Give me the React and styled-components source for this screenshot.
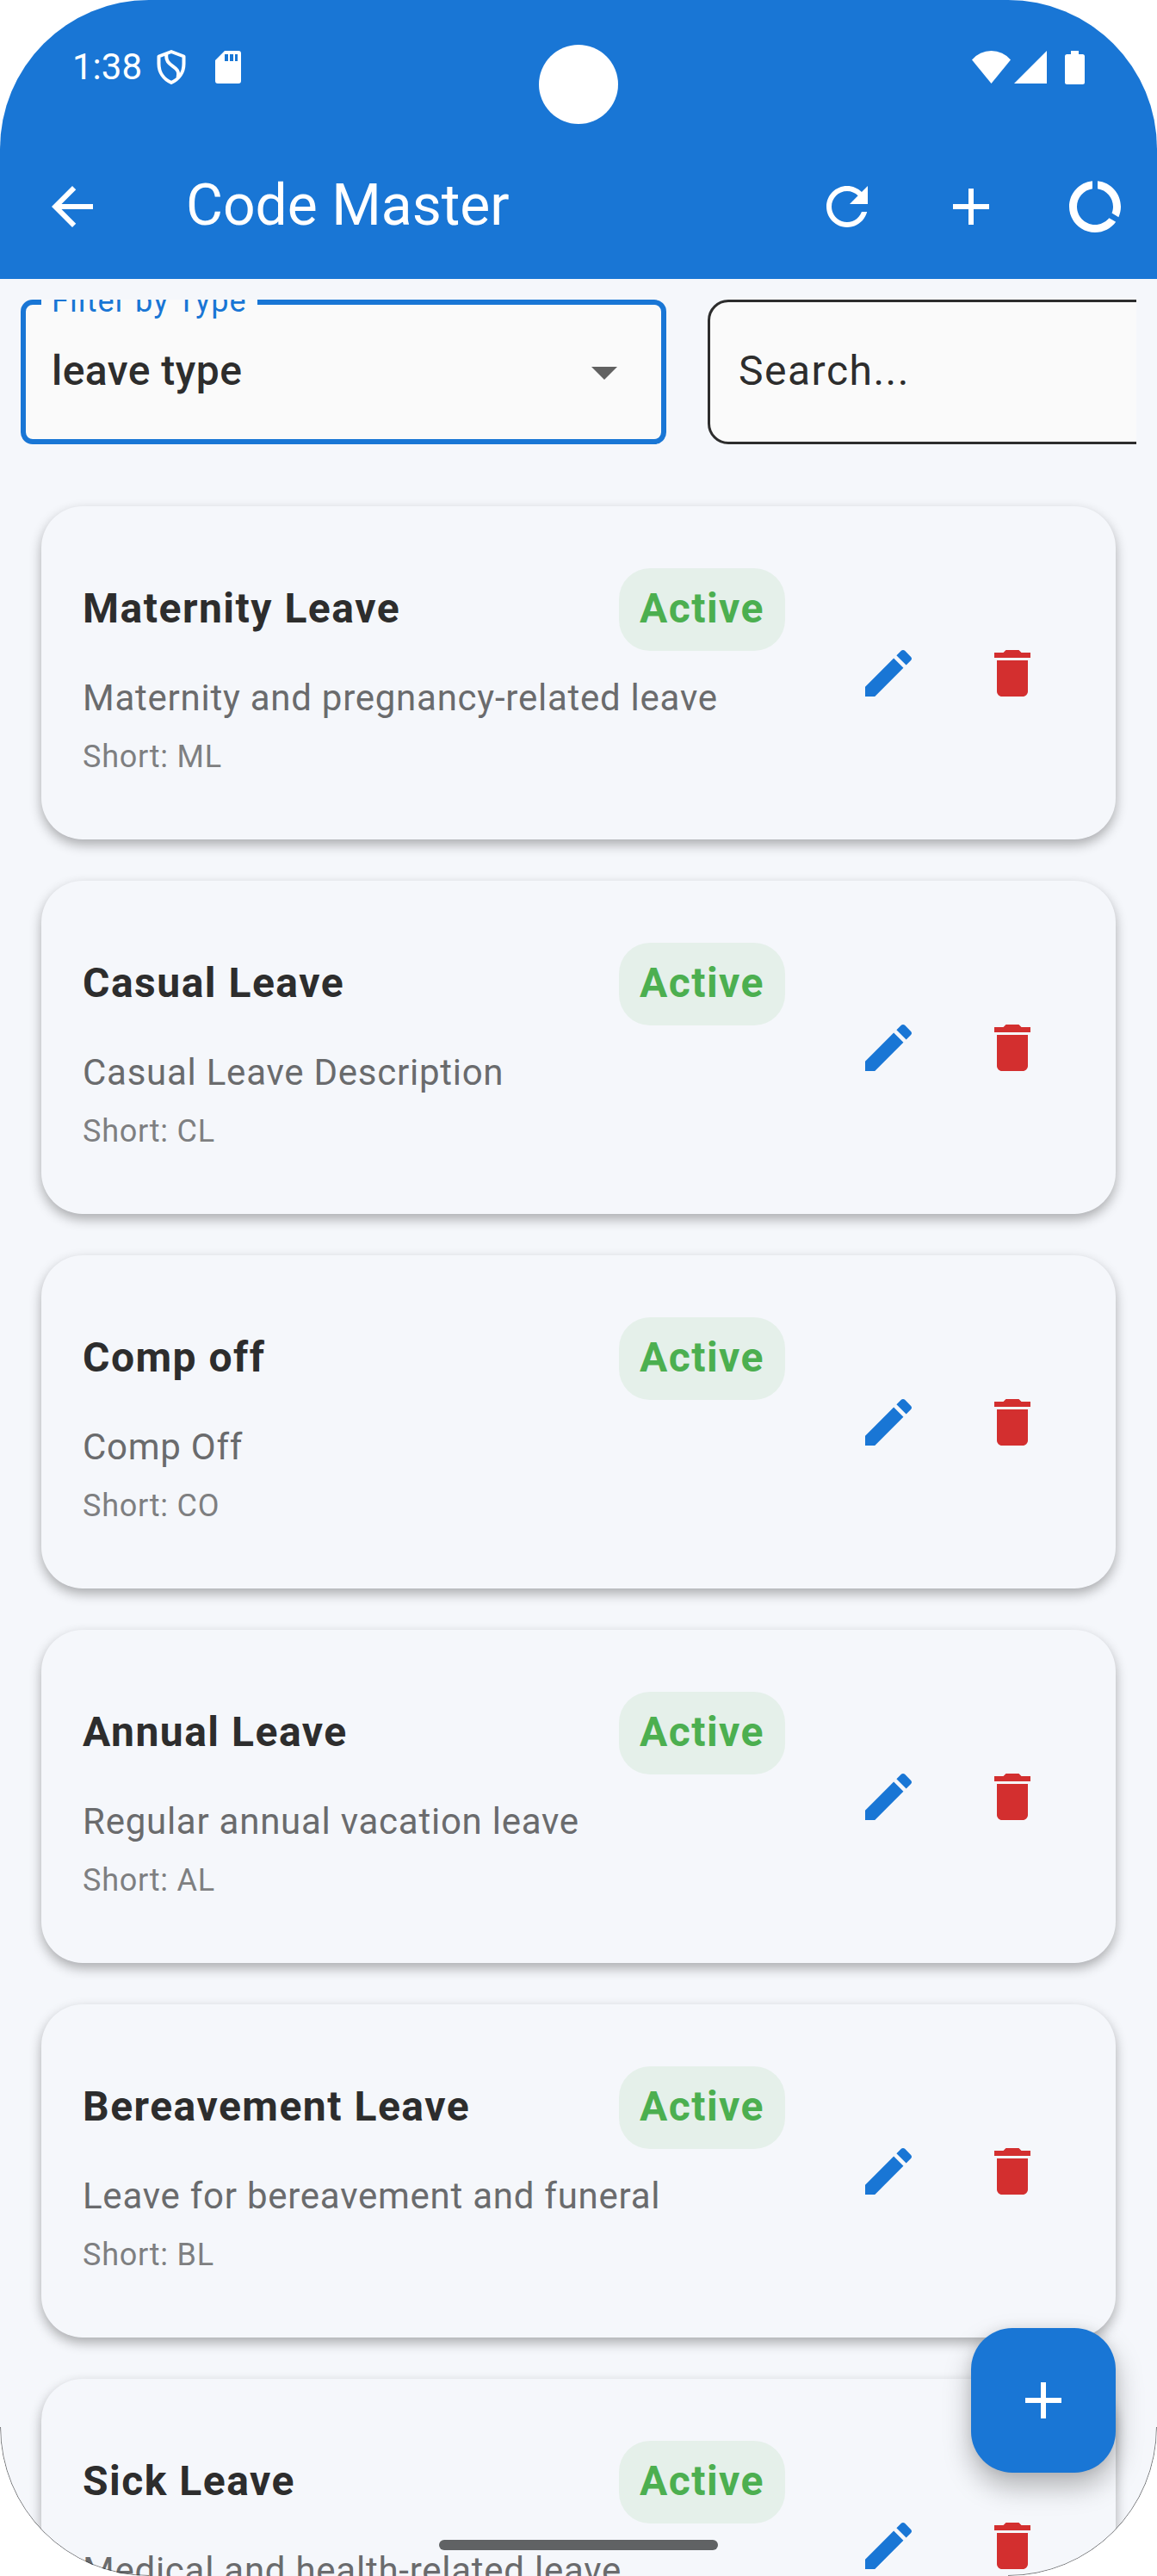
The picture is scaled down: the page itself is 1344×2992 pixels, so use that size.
import React from "react";
import styled, { createGlobalStyle } from "styled-components";

const Global = createGlobalStyle`
  *, *::before, *::after { box-sizing: border-box; }
  body { margin: 0; background: #fff; font-family: Roboto, "Noto Sans", sans-serif; }
`;

const Screen = styled.div`
  position: relative;
  width: 1344px;
  height: 2992px;
  overflow: hidden;
  border-radius: 173px;
  background: #f5f7fb;
  display: flex;
  flex-direction: column;
`;

const Header = styled.header`
  flex: none;
  height: 324px;
  background: #1976d5;
  color: #fff;
`;

const StatusBar = styled.div`
  height: 156px;
  padding: 0 84px 0 84px;
  display: flex;
  justify-content: space-between;
`;

const StatusGroup = styled.div`
  display: flex;
  align-items: center;
  height: 156px;
`;

const Clock = styled.span`
  font-size: 42px;
  line-height: 48px;
  width: 98px;
`;

const StatusIcon = styled.svg`
  display: block;
  flex: none;
  fill: #fff;
  margin-left: ${(p) => p.$gap || 0}px;
`;

const Camera = styled.div`
  position: absolute;
  left: 626px;
  top: 52px;
  width: 92px;
  height: 92px;
  border-radius: 50%;
  background: #fff;
`;

const AppBar = styled.div`
  height: 168px;
  padding: 0 0 0 12px;
  display: flex;
  align-items: center;
`;

const IconButton = styled.button`
  flex: none;
  display: grid;
  place-items: center;
  width: 144px;
  height: 144px;
  padding: 0;
  border: 0;
  background: none;
  color: ${(p) => p.$color || "inherit"};
`;

const AppTitle = styled.h1`
  flex: 1;
  margin: 0;
  padding: 0 0 3px 60px;
  font-size: 66px;
  font-weight: 400;
  line-height: 84px;
`;

const Filters = styled.div`
  flex: none;
  display: flex;
  gap: 48px;
  margin: 24px 24px 0;
  height: 168px;
  overflow: hidden;
`;

const Field = styled.div`
  flex: none;
  position: relative;
  display: flex;
  align-items: center;
  justify-content: space-between;
  width: 750px;
  height: 168px;
  background: #fafafa;
  color: #2d2d2d;
  border: ${(p) => (p.$focused ? "6px solid #1976d5" : "3px solid #2d2d2d")};
  border-radius: ${(p) => (p.$focused ? 14 : 24)}px;
  padding: ${(p) => (p.$focused ? "0 30px" : "0 33px")};
`;

const FieldLabel = styled.span`
  position: absolute;
  left: 18px;
  top: -25px;
  width: 251px;
  padding-left: 12px;
  background: #fafafa;
  color: #1976d5;
  font-size: 36px;
  line-height: 42px;
  letter-spacing: 1.1px;
  white-space: nowrap;
`;

const FieldText = styled.span`
  padding-bottom: 2px;
  font-size: 48px;
  line-height: 72px;
  font-weight: ${(p) => p.$weight};
  letter-spacing: ${(p) => p.$spacing}px;
`;

const List = styled.main`
  flex: none;
  display: flex;
  flex-direction: column;
  gap: 48px;
  padding: 72px 48px 0;
`;

const Card = styled.article`
  height: 387px;
  padding: 72px 48px 0;
  border-radius: 48px;
  background: #f5f7fb;
  box-shadow: 0 6px 14px rgba(0, 0, 0, 0.31);
  display: flex;
`;

const Details = styled.div`
  width: 816px;
`;

const TitleRow = styled.div`
  display: flex;
  align-items: center;
  justify-content: space-between;
  height: 96px;
`;

const CardTitle = styled.h2`
  margin: 0;
  padding-bottom: 2px;
  font-size: 48px;
  line-height: 72px;
  font-weight: 700;
  letter-spacing: 1.5px;
  color: #2d2d2d;
`;

const Badge = styled.span`
  height: 96px;
  padding: 11px 24px 13px;
  border-radius: 36px;
  background: #e5f0ea;
  color: #4caf50;
  font-size: 48px;
  line-height: 72px;
  font-weight: 700;
  letter-spacing: 1.5px;
`;

const Description = styled.p`
  margin: 25px 0 0;
  font-size: 42px;
  line-height: 60px;
  letter-spacing: 0.75px;
  color: #6a6b6d;
  white-space: nowrap;
`;

const Short = styled.p`
  margin: 14px 0 0;
  font-size: 36px;
  line-height: 48px;
  letter-spacing: 0.75px;
  color: #7e7f81;
`;

const Actions = styled.div`
  display: flex;
  margin-left: 48px;
  height: 243px;
  align-items: center;
`;

const Fab = styled.button`
  position: absolute;
  left: 1128px;
  top: 2704px;
  width: 168px;
  height: 168px;
  padding: 0;
  border: 0;
  border-radius: 48px;
  display: grid;
  place-items: center;
  background: #1976d5;
  color: #fff;
  box-shadow: 0 16px 32px rgba(0, 0, 0, 0.28), 0 0 14px rgba(0, 0, 0, 0.08);
`;

const HomeIndicator = styled.div`
  position: absolute;
  left: 510px;
  top: 2950px;
  width: 324px;
  height: 12px;
  border-radius: 6px;
  background: #606264;
`;

const Bezel = styled.svg`
  position: absolute;
  left: 0;
  bottom: 0;
  pointer-events: none;
`;

const ICONS = {
  back: "M20 11H7.83l5.59-5.59L12 4l-8 8 8 8 1.41-1.41L7.83 13H20v-2z",
  refresh:
    "M17.65 6.35C16.2 4.9 14.21 4 12 4c-4.42 0-7.99 3.58-7.99 8s3.57 8 7.99 8c3.73 0 6.84-2.55 7.73-6h-2.08c-.82 2.33-3.04 4-5.65 4-3.31 0-6-2.69-6-6s2.69-6 6-6c1.66 0 3.14.69 4.22 1.78L13 11h7V4l-2.35 2.35z",
  add: "M19 13h-6v6h-2v-6H5v-2h6V5h2v6h6v2z",
  usage:
    "M13 2.05v3.03c3.39.49 6 3.39 6 6.92 0 .9-.18 1.75-.48 2.54l2.6 1.53c.56-1.24.88-2.62.88-4.07 0-5.18-3.95-9.45-9-9.95zM12 19c-3.87 0-7-3.13-7-7 0-3.53 2.61-6.43 6-6.92V2.05c-5.06.5-9 4.76-9 9.95 0 5.52 4.47 10 9.99 10 3.31 0 6.24-1.61 8.06-4.09l-2.6-1.53C16.17 17.98 14.21 19 12 19z",
  edit: "M3 17.25V21h3.75L17.81 9.94l-3.75-3.75L3 17.25zM20.71 7.04c.39-.39.39-1.02 0-1.41l-2.34-2.34c-.39-.39-1.02-.39-1.41 0l-1.83 1.83 3.75 3.75 1.83-1.83z",
  remove:
    "M6 19c0 1.1.9 2 2 2h8c1.1 0 2-.9 2-2V7H6v12zM19 4h-3.5l-1-1h-5l-1 1H5v2h14V4z",
  dropdown: "M7 10l5 5 5-5z",
};

const Icon = ({ name }) => (
  <svg width="72" height="72" viewBox="0 0 24 24" fill="currentColor">
    <path d={ICONS[name]} />
  </svg>
);

const LEAVES = [
  ["Maternity Leave", "Maternity and pregnancy-related leave", "ML"],
  ["Casual Leave", "Casual Leave Description", "CL"],
  ["Comp off", "Comp Off", "CO"],
  ["Annual Leave", "Regular annual vacation leave", "AL"],
  ["Bereavement Leave", "Leave for bereavement and funeral", "BL"],
  ["Sick Leave", "Medical and health-related leave", "SL"],
];

export default function App() {
  return (
    <>
      <Global />
      <Screen>
        <Header>
          <StatusBar>
            <StatusGroup>
              <Clock>1:38</Clock>
              <StatusIcon width="34" height="40" viewBox="0 0 34 40">
                <path
                  d="M17 2L31.500 7.500V16C31.500 26 26 34 17 38C8 34 2.500 26 2.500 16V7.500ZM11.500 4.500C8.500 21 29 17 24.500 32"
                  fill="none"
                  stroke="#fff"
                  strokeWidth="4"
                  strokeLinejoin="round"
                />
              </StatusIcon>
              <StatusIcon $gap={34} width="30" height="38" viewBox="0 0 30 38">
                <path
                  fillRule="evenodd"
                  d="M11 0H27a3 3 0 0 1 3 3V35a3 3 0 0 1-3 3H3a3 3 0 0 1-3-3V11ZM11 4V12H15V4ZM17 4V12H21V4ZM23 4V12H26V4Z"
                />
              </StatusIcon>
            </StatusGroup>
            <StatusGroup>
              <StatusIcon width="45" height="38" viewBox="0 0 45 38">
                <path d="M0 10.500Q9 0 22.500 0T45 10.500L22.500 38Z" />
              </StatusIcon>
              <StatusIcon $gap={4} width="38" height="38" viewBox="0 0 38 38">
                <path d="M38 0V38H0Z" />
              </StatusIcon>
              <StatusIcon $gap={21} width="23" height="39" viewBox="0 0 23 39">
                <path d="M7 0H16V4H20.500A2.500 2.500 0 0 1 23 6.500V36.500A2.500 2.500 0 0 1 20.500 39H2.500A2.500 2.500 0 0 1 0 36.500V6.500A2.500 2.500 0 0 1 2.500 4H7Z" />
              </StatusIcon>
            </StatusGroup>
          </StatusBar>
          <AppBar>
            <IconButton aria-label="Back"><Icon name="back" /></IconButton>
            <AppTitle>Code Master</AppTitle>
            <IconButton aria-label="Refresh"><Icon name="refresh" /></IconButton>
            <IconButton aria-label="Add"><Icon name="add" /></IconButton>
            <IconButton aria-label="Usage"><Icon name="usage" /></IconButton>
          </AppBar>
        </Header>
        <Camera />

        <Filters>
          <Field $focused>
            <FieldLabel>Filter by Type</FieldLabel>
            <FieldText $weight={500} $spacing={0.45}>leave type</FieldText>
            <svg width="72" height="72" viewBox="0 0 24 24" fill="#616161">
              <path d={ICONS.dropdown} />
            </svg>
          </Field>
          <Field>
            <FieldText $weight={400} $spacing={1.5}>Search...</FieldText>
          </Field>
        </Filters>

        <List>
          {LEAVES.map(([title, description, code]) => (
            <Card key={code}>
              <Details>
                <TitleRow>
                  <CardTitle>{title}</CardTitle>
                  <Badge>Active</Badge>
                </TitleRow>
                <Description>{description}</Description>
                <Short>Short: {code}</Short>
              </Details>
              <Actions>
                <IconButton $color="#1976d5" aria-label="Edit"><Icon name="edit" /></IconButton>
                <IconButton $color="#d32f2f" aria-label="Delete"><Icon name="remove" /></IconButton>
              </Actions>
            </Card>
          ))}
        </List>

        <Fab aria-label="Add code"><Icon name="add" /></Fab>
        <HomeIndicator />
        <Bezel width="1344" height="230" viewBox="0 0 1344 230" fill="none" stroke="#222" strokeWidth="1">
          <path d="M.5 57A172.500 172.500 0 0 0 173 229.500M1343.500 57A172.500 172.500 0 0 1 1171 229.500" strokeOpacity=".6" />
        </Bezel>
      </Screen>
    </>
  );
}
